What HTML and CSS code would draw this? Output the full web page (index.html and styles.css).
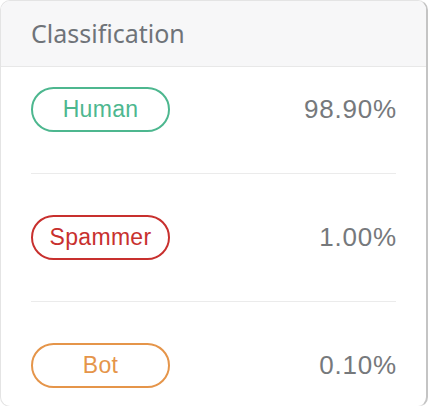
FILE: index.html
```html
<!DOCTYPE html>
<html>
<head>
<meta charset="utf-8">
<link rel="stylesheet" href="styles.css">
</head>
<body>
<div class="card">
  <div class="card-header">Classification</div>
  <ul class="rows">
    <li class="row first">
      <span class="pill pill-human">Human</span>
      <span class="pct">98.90%</span>
    </li>
    <li class="row">
      <span class="pill pill-spam">Spammer</span>
      <span class="pct">1.00%</span>
    </li>
    <li class="row last">
      <span class="pill pill-bot">Bot</span>
      <span class="pct">0.10%</span>
    </li>
  </ul>
</div>
</body>
</html>
```
FILE: styles.css
```css
html, body {
  margin: 0;
  padding: 0;
  background: #ffffff;
}
.card {
  width: 428px;
  box-sizing: border-box;
  border: 1px solid #e4e4e4;
  border-right: 2px solid #c4c4c4;
  border-radius: 10px;
  overflow: hidden;
  background: #ffffff;
}
.card-header {
  height: 66px;
  box-sizing: border-box;
  background: #f7f7f8;
  border-bottom: 1px solid #e8e8e8;
  padding: 15px 0 0 30px;
  font-family: "Noto Sans", sans-serif;
  font-size: 25px;
  line-height: 34px;
  color: #6f7378;
}
.rows {
  list-style: none;
  margin: 0;
  padding: 0;
}
.row {
  display: flex;
  align-items: center;
  justify-content: space-between;
  margin: 0 30px 0 30px;
  padding: 41px 0 41px 0;
  border-bottom: 1px solid #ebebeb;
}
.row.first {
  padding-top: 20px;
}
.row.last {
  border-bottom: none;
  padding-bottom: 18px;
}
.pill {
  width: 139px;
  height: 45px;
  box-sizing: border-box;
  border: 2px solid;
  border-radius: 23px;
  display: flex;
  align-items: center;
  justify-content: center;
  font-family: "Liberation Sans", Arial, sans-serif;
  font-size: 23px;
  letter-spacing: 0.3px;
}
.pill-human {
  color: #4db78f;
  border-color: #4db78f;
}
.pill-spam {
  color: #c8302e;
  border-color: #c8302e;
}
.pill-bot {
  color: #e5954a;
  border-color: #e5954a;
}
.pct {
  font-family: "Liberation Sans", Arial, sans-serif;
  font-size: 26px;
  letter-spacing: 0.8px;
  color: #76797c;
  margin-right: -1px;
}
```
